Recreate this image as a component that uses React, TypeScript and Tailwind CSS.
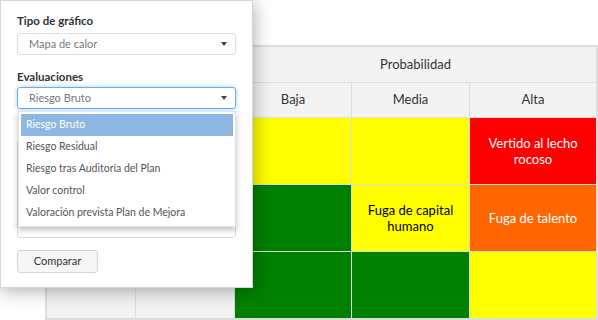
import React from "react";

const font = { fontFamily: "Lato, 'Open Sans', sans-serif" };

function Caret() {
  return (
    <svg width="6" height="4" viewBox="0 0 6 4" className="shrink-0">
      <path d="M0 0h6L3 4z" fill="#444" />
    </svg>
  );
}

const options = [
  "Riesgo Bruto",
  "Riesgo Residual",
  "Riesgo tras Auditoría del Plan",
  "Valor control",
  "Valoración prevista Plan de Mejora",
];

function Panel() {
  return (
    <div className="absolute left-0 top-0 z-10 flex h-[288px] w-[253px] flex-col border border-[#d6d6d6] bg-white px-[16px] pt-[13px] shadow-[0_2px_18px_rgba(0,0,0,0.35)]">
      <div className="h-[14px] text-[11.5px] font-bold leading-[14px] text-[#333]">Tipo de gráfico</div>
      <div className="mt-[5px] flex h-[22px] items-center justify-between rounded-[3px] border border-[#ddd] pl-[11px] pr-[8px] text-[11px] text-[#777]">
        <span>Mapa de calor</span>
        <Caret />
      </div>
      <div className="mt-[15px] h-[14px] text-[11.5px] font-bold leading-[14px] text-[#333]">Evaluaciones</div>
      <div className="relative mt-[3px]">
        <div className="flex h-[22px] items-center justify-between rounded-[3px] border border-[#66afe9] pl-[11px] pr-[8px] text-[11px] text-[#777] shadow-[0_0_4px_rgba(102,175,233,0.6)]">
          <span>Riesgo Bruto</span>
          <Caret />
        </div>
        <div className="absolute left-[1px] right-0 top-[24px] z-20 flex flex-col border border-[#e3e3e3] bg-white p-[2px] shadow-[0_3px_6px_rgba(0,0,0,0.25)]">
          {options.map((o, i) => (
            <div
              key={o}
              className={
                i === 0
                  ? "flex h-[22px] items-center bg-[#8db6e3] px-[5px] text-[10.5px] text-white"
                  : "flex h-[22px] items-center px-[5px] text-[10.5px] text-[#555]"
              }
            >
              {o}
            </div>
          ))}
        </div>
      </div>
      <div className="mt-[32px] h-[97px] rounded-[3px] border border-[#ddd]" />
      <button className="mt-[12px] flex h-[23px] w-[81px] items-center justify-center rounded-[3px] border border-[#d4d4d4] bg-[#f6f6f6] text-[11px] text-[#333]">
        Comparar
      </button>
    </div>
  );
}

function Cell({ color, text, dark }: { color: string; text?: string; dark?: boolean }) {
  return (
    <div
      className={`flex items-center justify-center px-2 text-center text-[13px] leading-[16px] ${color} ${dark ? "text-black" : "text-white"}`}
    >
      {text}
    </div>
  );
}

function Matrix() {
  return (
    <div className="ml-[45px] mt-[45px] grid w-[553px] grid-cols-[88px_98px_116px_117px_126px] grid-rows-[35px_34px_66px_66px_66px] gap-px border-2 border-[#ddd] bg-[#ddd] text-[13px] text-[#333]">
      <div className="col-span-2 row-span-2 bg-[#f3f3f3]" />
      <div className="col-span-3 flex items-center justify-center bg-[#f3f3f3]">Probabilidad</div>
      <div className="flex items-center justify-center bg-[#f3f3f3]">Baja</div>
      <div className="flex items-center justify-center bg-[#f3f3f3]">Media</div>
      <div className="flex items-center justify-center bg-[#f3f3f3]">Alta</div>

      <div className="row-span-3 bg-[#f3f3f3]" />
      <div className="bg-[#f3f3f3]" />
      <Cell color="bg-[#ffff00]" dark />
      <Cell color="bg-[#ffff00]" dark />
      <Cell color="bg-[#ff0000]" text="Vertido al lecho rocoso" />

      <div className="bg-[#f3f3f3]" />
      <Cell color="bg-[#008000]" />
      <Cell color="bg-[#ffff00]" text="Fuga de capital humano" dark />
      <Cell color="bg-[#ff6600]" text="Fuga de talento" />

      <div className="bg-[#f3f3f3]" />
      <Cell color="bg-[#008000]" />
      <Cell color="bg-[#008000]" />
      <Cell color="bg-[#ffff00]" dark />
    </div>
  );
}

export default function App() {
  return (
    <div className="relative h-[320px] w-[598px] overflow-hidden bg-white" style={font}>
      <Panel />
      <Matrix />
    </div>
  );
}
